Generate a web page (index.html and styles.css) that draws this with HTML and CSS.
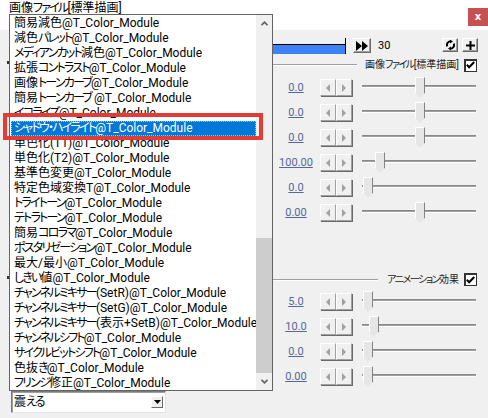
FILE: index.html
```html
<!DOCTYPE html>
<html lang="ja">
<head>
<meta charset="utf-8">
<link rel="stylesheet" href="styles.css">
</head>
<body>
<div class="window">
  <div class="titlebar">
    <span class="title">画像<span class="k">ファイル</span>[標準描画]</span>
    <span class="close">x</span>
  </div>
  <div class="content">
    <div class="timeline">
      <div class="tbar"><div class="fill"></div></div>
      <button class="btn play"><svg width="12" height="10" viewBox="0 0 12 10"><path d="M0 0L6 5L0 10Z M6 0L12 5L6 10Z" fill="#000"/></svg></button>
      <span class="frame">30</span>
      <button class="btn tiny push"><svg width="9" height="10" viewBox="0 0 9 10"><path d="M4.5 1.2A3.8 3.8 0 0 0 1.2 6.4" fill="none" stroke="#000" stroke-width="2"/><path d="M4.5 8.8A3.8 3.8 0 0 0 7.8 3.6" fill="none" stroke="#000" stroke-width="2"/><path d="M4 -0.5L7 1.5L4 3.5Z M5 6.5L2 8.5L5 10.5Z" fill="#000"/></svg></button>
      <button class="btn tiny"><svg width="9" height="9" viewBox="0 0 9 9"><path d="M3.5 0H5.5V3.5H9V5.5H5.5V9H3.5V5.5H0V3.5H3.5Z" fill="#000"/></svg></button>
    </div>

    <div class="ghead g1">
      <span class="gdot"></span>
      <span class="gline"></span>
      <span class="glabel">画像<span class="k">ファイル</span>[標準描画]</span>
      <span class="check"><svg width="9" height="8" viewBox="0 0 9 8"><path d="M0.8 3.8L3.2 6.3L8.2 1" fill="none" stroke="#000" stroke-width="2"/></svg></span>
    </div>

    <div class="row"><span class="val">0.0</span><span class="arrows"><span class="ab"><i class="tl"></i></span><span class="ab"><i class="tr"></i></span></span><span class="slider"><span class="track"></span><span class="thumb" style="left:53px"></span></span></div>
    <div class="row"><span class="val">0.0</span><span class="arrows"><span class="ab"><i class="tl"></i></span><span class="ab"><i class="tr"></i></span></span><span class="slider"><span class="track"></span><span class="thumb" style="left:53px"></span></span></div>
    <div class="row"><span class="val">0.0</span><span class="arrows"><span class="ab"><i class="tl"></i></span><span class="ab"><i class="tr"></i></span></span><span class="slider"><span class="track"></span><span class="thumb" style="left:53px"></span></span></div>
    <div class="row"><span class="val">100.00</span><span class="arrows"><span class="ab"><i class="tl"></i></span><span class="ab"><i class="tr"></i></span></span><span class="slider"><span class="track"></span><span class="thumb" style="left:13px"></span></span></div>
    <div class="row"><span class="val">0.0</span><span class="arrows"><span class="ab"><i class="tl"></i></span><span class="ab"><i class="tr"></i></span></span><span class="slider"><span class="track"></span><span class="thumb" style="left:1px"></span></span></div>
    <div class="row"><span class="val">0.00</span><span class="arrows"><span class="ab"><i class="tl"></i></span><span class="ab"><i class="tr"></i></span></span><span class="slider"><span class="track"></span><span class="thumb" style="left:53px"></span></span></div>

    <div class="ghead g2">
      <span class="gdot"></span>
      <span class="gline"></span>
      <span class="glabel"><span class="k">アニメーション</span>効果</span>
      <span class="check"><svg width="9" height="8" viewBox="0 0 9 8"><path d="M0.8 3.8L3.2 6.3L8.2 1" fill="none" stroke="#000" stroke-width="2"/></svg></span>
    </div>

    <div class="row"><span class="val">5.0</span><span class="arrows"><span class="ab"><i class="tl"></i></span><span class="ab"><i class="tr"></i></span></span><span class="slider"><span class="track"></span><span class="thumb" style="left:1px"></span></span></div>
    <div class="row"><span class="val">10.0</span><span class="arrows"><span class="ab"><i class="tl"></i></span><span class="ab"><i class="tr"></i></span></span><span class="slider"><span class="track"></span><span class="thumb" style="left:7px"></span></span></div>
    <div class="row"><span class="val">0.0</span><span class="arrows"><span class="ab"><i class="tl"></i></span><span class="ab"><i class="tr"></i></span></span><span class="slider"><span class="track"></span><span class="thumb" style="left:1px"></span></span></div>
    <div class="row"><span class="val">0.00</span><span class="arrows"><span class="ab"><i class="tl"></i></span><span class="ab"><i class="tr"></i></span></span><span class="slider"><span class="track"></span><span class="thumb" style="left:1px"></span></span></div>

    <div class="combo">
      <span class="ctext">震<span class="k">える</span></span>
      <span class="cbtn"><svg width="7" height="4" viewBox="0 0 7 4"><path d="M0 0H7L3.5 4Z" fill="#000"/></svg></span>
    </div>
  </div>

  <div class="dropdown">
    <ul class="items">
      <li>簡易減色@T_Color_Module</li>
      <li>減色<span class="k">パレット</span>@T_Color_Module</li>
      <li><span class="k">メディアンカット</span>減色@T_Color_Module</li>
      <li>拡張<span class="k">コントラスト</span>@T_Color_Module</li>
      <li>画像<span class="k">トーンカーブ</span>@T_Color_Module</li>
      <li>簡易<span class="k">トーンカーブ</span> @T_Color_Module</li>
      <li><span class="k">イコライズ</span>@T_Color_Module</li>
      <li class="sel"><span class="k">シャドウ・ハイライト</span>@T_Color_Module</li>
      <li>単色化(T1)@T_Color_Module</li>
      <li>単色化(T2)@T_Color_Module</li>
      <li>基準色変更@T_Color_Module</li>
      <li>特定色域変換T@T_Color_Module</li>
      <li><span class="k">トライトーン</span>@T_Color_Module</li>
      <li><span class="k">テトラトーン</span>@T_Color_Module</li>
      <li>簡易<span class="k">コロラマ</span>@T_Color_Module</li>
      <li><span class="k">ポスタリゼーション</span>@T_Color_Module</li>
      <li>最大/最小@T_Color_Module</li>
      <li><span class="k">しきい</span>値@T_Color_Module</li>
      <li><span class="k">チャンネルミキサー</span>(SetR)@T_Color_Module</li>
      <li><span class="k">チャンネルミキサー</span>(SetG)@T_Color_Module</li>
      <li><span class="k">チャンネルミキサー</span>(表示+SetB)@T_Color_Module</li>
      <li><span class="k">チャンネルシフト</span>@T_Color_Module</li>
      <li><span class="k">サイクルビットシフト</span>@T_Color_Module</li>
      <li>色抜<span class="k">き</span>@T_Color_Module</li>
      <li><span class="k">フリンジ</span>修正@T_Color_Module</li>
    </ul>
    <div class="scrollbar">
      <span class="sbtn"><svg width="7" height="5" viewBox="0 0 7 5"><path d="M0.5 4.2L3.5 1.2L6.5 4.2" fill="none" stroke="#606060" stroke-width="1.6"/></svg></span>
      <span class="strack"><span class="sthumb"></span></span>
      <span class="sbtn"><svg width="7" height="5" viewBox="0 0 7 5"><path d="M0.5 0.8L3.5 3.8L6.5 0.8" fill="none" stroke="#606060" stroke-width="1.6"/></svg></span>
    </div>
  </div>

  <div class="mark"></div>
</div>
</body>
</html>
```

FILE: styles.css
```css
* { box-sizing: border-box; }
html, body { margin: 0; padding: 0; }
body {
  width: 488px;
  height: 418px;
  overflow: hidden;
  background: #f0f0f0;
  font-family: Roboto, "Noto Sans CJK JP", sans-serif;
  font-size: 12px;
  color: #000;
  font-feature-settings: "palt" 1;
}
.k { letter-spacing: -0.15em; }
.window {
  position: relative;
  width: 488px;
  height: 418px;
  display: flex;
  flex-direction: column;
}
.titlebar {
  height: 30px;
  background: #fff;
  display: flex;
  align-items: flex-start;
  justify-content: space-between;
}
.title {
  margin: 1px 0 0 9px;
  font-size: 12px;
  line-height: 15px;
}
.close {
  margin-top: 8px;
  width: 20px;
  height: 18px;
  background: #c75050;
  color: #fff;
  font-family: "DejaVu Sans", sans-serif;
  font-size: 10px;
  font-weight: bold;
  line-height: 17px;
  text-align: center;
}
.content {
  display: flex;
  flex-direction: column;
}
.timeline {
  margin-top: 8px;
  height: 16px;
  display: flex;
  align-items: flex-start;
}
.tbar {
  margin-left: 20px;
  width: 326px;
  height: 16px;
  display: flex;
  align-items: flex-end;
  border-right: 1px solid #000;
}
.tbar .fill {
  flex: 1;
  height: 10px;
  border-top: 1px solid #000;
  background: #3d83f5;
}
.btn {
  padding: 0;
  margin: 0;
  background: #f0f0f0;
  border: 1px solid;
  border-color: #fff #696969 #696969 #fff;
  box-shadow: inset -1px -1px 0 #a0a0a0;
  display: flex;
  align-items: center;
  justify-content: center;
}
.play {
  margin-left: 7px;
  width: 18px;
  height: 15px;
}
.frame {
  margin-left: 7px;
  line-height: 16px;
  font-size: 11px;
}
.tiny {
  width: 16px;
  height: 14px;
}
.push { margin-left: auto; margin-right: 4px; }
.tiny + .tiny { margin-right: 10px; }

.ghead {
  display: flex;
  align-items: center;
  height: 20px;
}
.g1 { margin-top: 1px; }
.g2 { margin-top: 45px; height: 19px; }
.gdot {
  align-self: flex-start;
  margin: 6px 0 0 7px;
  width: 2px;
  height: 3px;
  background: #333;
}
.gline {
  flex: 1;
  margin-left: 11px;
  height: 2px;
  border-top: 1px solid #a0a0a0;
  border-bottom: 1px solid #fff;
}
.glabel {
  font-size: 10px;
  color: #222;
  line-height: 12px;
}
.g1 .glabel { margin-left: 8px; }
.g2 .glabel { margin-left: 9px; }
.check {
  margin: 0 11px 0 5px;
  width: 13px;
  height: 13px;
  background: #fff;
  border: 1px solid #333;
  box-shadow: inset 1px 1px 0 #333;
  display: flex;
  align-items: center;
  justify-content: center;
}

.row {
  height: 25px;
  display: grid;
  grid-template-columns: 272px 48px 32px 1fr;
  align-items: center;
}
.val {
  grid-column: 2;
  text-align: center;
  color: #55679a;
  text-decoration: underline;
  font-size: 11px;
  line-height: 14px;
}
.arrows {
  display: flex;
}
.ab {
  width: 16px;
  height: 17px;
  background: #f0f0f0;
  border: 1px solid;
  border-color: #fff #a0a0a0 #a0a0a0 #fff;
  box-shadow: 1px 1px 0 #696969;
  display: flex;
  align-items: center;
  justify-content: center;
}
.ab i {
  width: 0;
  height: 0;
  border-top: 4px solid transparent;
  border-bottom: 4px solid transparent;
}
.ab i.tl { border-right: 4px solid #a0a0a0; }
.ab i.tr { border-left: 4px solid #a0a0a0; }
.slider {
  position: relative;
  margin: 0 12px 0 10px;
  height: 21px;
  display: flex;
  align-items: center;
}
.track {
  width: 100%;
  height: 3px;
  margin-top: -3px;
  background: linear-gradient(#8a8a8a 0 1px, #a0a0a0 1px 2px, #fff 2px 3px);
}
.thumb {
  position: absolute;
  top: 0;
  width: 10px;
  height: 21px;
  background: #e6e6e6;
  border: 1px solid;
  border-color: #fff #838383 transparent #fff;
  clip-path: polygon(0 0, 100% 0, 100% 75%, 50% 100%, 0 75%);
}

.combo {
  margin: 2px 0 0 11px;
  width: 155px;
  height: 22px;
  background: #fff;
  border: 1px solid;
  border-color: #7a7a7a #e3e3e3 #e3e3e3 #7a7a7a;
  box-shadow: inset 1px 1px 0 #a0a0a0;
  display: flex;
  align-items: center;
  justify-content: space-between;
}
.ctext {
  margin-left: 2px;
  line-height: 15px;
}
.cbtn {
  margin-right: 2px;
  width: 12px;
  height: 12px;
  background: #f0f0f0;
  border: 1px solid;
  border-color: #fff #696969 #696969 #fff;
  display: flex;
  align-items: center;
  justify-content: center;
}

.dropdown {
  position: absolute;
  left: 9px;
  top: 14px;
  width: 264px;
  height: 377px;
  background: #fff;
  border: 1px solid #646464;
  display: flex;
  overflow: hidden;
}
.items {
  flex: 1;
  list-style: none;
  margin: 0;
  padding: 1px 0 0 1px;
  overflow: hidden;
}
.items li {
  height: 15px;
  line-height: 15px;
  padding-left: 3px;
  white-space: nowrap;
}
.items li.sel {
  background: #0078d7;
  color: #fff;
  outline: 1px dotted #f4b860;
  outline-offset: -1px;
}
.scrollbar {
  width: 16px;
  background: #f0f0f0;
  display: flex;
  flex-direction: column;
}
.sbtn {
  height: 17px;
  display: flex;
  align-items: center;
  justify-content: center;
}
.strack {
  flex: 1;
  display: flex;
  flex-direction: column;
  justify-content: flex-end;
}
.sthumb {
  height: 135px;
  background: #cdcdcd;
}
.mark {
  position: absolute;
  left: 3px;
  top: 113px;
  width: 260px;
  height: 27px;
  border: 4px solid #e53b36;
}
```
